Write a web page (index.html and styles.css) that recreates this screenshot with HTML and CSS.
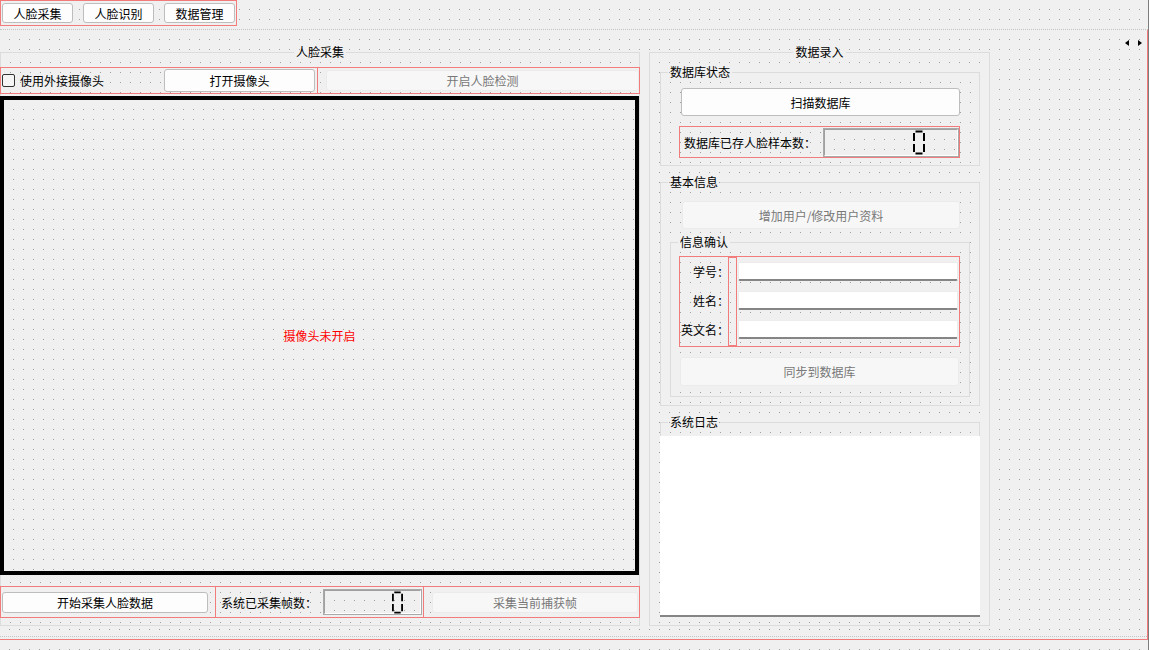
FILE: index.html
```html
<!DOCTYPE html>
<html lang="zh-CN">
<head>
  <meta charset="UTF-8">
  <meta name="viewport" content="width=device-width, initial-scale=1.0">
  <title>人脸识别</title>
  <link rel="stylesheet" href="styles.css">
</head>
<body>

<div class="window">
  <div class="topbar">
    <div class="tabset layout">
      <button class="btn tabbtn">人脸采集</button>
      <button class="btn tabbtn">人脸识别</button>
      <button class="btn tabbtn">数据管理</button>
    </div>
  </div>

  <div class="central">
    <div class="scroller"><span class="arrow left"></span><span class="arrow right"></span></div>

    <div class="page">
      <!-- 左侧：人脸采集 -->
      <fieldset class="group capture">
        <legend class="center">人脸采集</legend>
        <div class="pane">
          <div class="row top-row">
            <div class="layout cam-box">
              <label class="check"><span class="box"></span>使用外接摄像头</label>
              <button class="btn open-cam">打开摄像头</button>
            </div>
            <div class="layout detect-box">
              <button class="btn disabled detect">开启人脸检测</button>
            </div>
          </div>

          <div class="video">摄像头未开启</div>

          <div class="row bottom-row">
            <div class="layout start-box">
              <button class="btn start">开始采集人脸数据</button>
            </div>
            <div class="layout count-box">
              <span class="label">系统已采集帧数：</span>
              <div class="lcd small">
                <svg width="11" height="23" viewBox="0 0 12 24"><path d="M2.5 1H9.5M11 2.5V10.5M11 13.5V21.5M2.5 23H9.5M1 13.5V21.5M1 2.5V10.5" stroke="#000" stroke-width="2" fill="none"/></svg>
              </div>
            </div>
            <div class="layout grab-box">
              <button class="btn disabled grab">采集当前捕获帧</button>
            </div>
          </div>
        </div>
      </fieldset>

      <!-- 右侧：数据录入 -->
      <fieldset class="group entry">
        <legend class="center">数据录入</legend>

        <fieldset class="group sub db-state">
          <legend>数据库状态</legend>
          <button class="btn scan">扫描数据库</button>
          <div class="layout sample-box">
            <span class="label">数据库已存人脸样本数：</span>
            <div class="lcd big">
              <svg width="12" height="25" viewBox="0 0 12 24"><path d="M2.5 1H9.5M11 2.5V10.5M11 13.5V21.5M2.5 23H9.5M1 13.5V21.5M1 2.5V10.5" stroke="#000" stroke-width="2" fill="none"/></svg>
            </div>
          </div>
        </fieldset>

        <fieldset class="group sub basic">
          <legend>基本信息</legend>
          <button class="btn disabled add-user">增加用户/修改用户资料</button>

          <fieldset class="group confirm">
            <legend>信息确认</legend>
            <div class="layout form">
              <div class="labels">
                <span>学号：</span>
                <span>姓名：</span>
                <span>英文名：</span>
              </div>
              <div class="layout spacer"></div>
              <div class="inputs">
                <input class="edit" type="text">
                <input class="edit" type="text">
                <input class="edit" type="text">
              </div>
            </div>
            <button class="btn disabled sync">同步到数据库</button>
          </fieldset>
        </fieldset>

        <fieldset class="group sub log">
          <legend>系统日志</legend>
          <div class="log-text"></div>
        </fieldset>
      </fieldset>
    </div>
  </div>
</div>

</body>
</html>
```

FILE: styles.css
```css
body {
  margin: 0;
  width: 1149px;
  height: 650px;
  overflow: hidden;
  font-family: "Noto Sans CJK SC", "Noto Sans", sans-serif;
  font-size: 12px;
  color: #000;
}

/* Qt Designer 的点阵背景 */
.window, .group, .video, .lcd {
  background-color: #f0f0f0;
  background-image:
    linear-gradient(90deg, #f0f0f0 9px, transparent 9px),
    linear-gradient(#f0f0f0 9px, #a0a0a0 9px);
  background-size: 10px 10px;
}
.video, .lcd { background-color: transparent; background-image: linear-gradient(90deg, #f0f0f0 9px, transparent 9px), linear-gradient(#f0f0f0 9px, #a0a0a0 9px); }

.window {
  width: 1148px;
  height: 650px;
  border-right: 1px solid #7d7d7d;
}

.layout { border: 1px solid #f27c7c; box-sizing: border-box; }

.btn {
  font-family: inherit;
  font-size: 12px;
  color: #000;
  background: #fdfdfd;
  border: 1px solid #bdbdbd;
  border-radius: 3px;
  padding: 0;
  box-sizing: border-box;
}
.btn.disabled {
  background: #f7f7f7;
  border-color: #ebebeb;
  color: #787878;
}

/* 顶部按钮 */
.topbar {
  height: 29px;
  border-bottom: 1px dotted #c4c4c4;
}
.tabset {
  display: inline-flex;
  gap: 10px;
  padding: 2px 1px;
}
.tabbtn { width: 71px; height: 20px; }

.central {
  position: relative;
  height: 609px;
  border-bottom: 1px solid #f27c7c;
  border-right: 1px solid #f27c7c;
  box-sizing: content-box;
}
.scroller {
  position: absolute;
  top: 10px;
  right: 5px;
  display: flex;
  gap: 9px;
}
.arrow { width: 0; height: 0; border-top: 3px solid transparent; border-bottom: 3px solid transparent; }
.arrow.left { border-right: 4px solid #000; }
.arrow.right { border-left: 4px solid #000; }

.page {
  height: 591px;
  padding-top: 15px;
  display: flex;
  gap: 9px;
  border-bottom: 1px dotted #c4c4c4;
}

/* 分组框 */
.group {
  margin: 0;
  padding: 0;
  min-width: 0;
  border: 1px solid #dcdcdc;
  box-sizing: border-box;
  background-color: transparent;
}
.group legend {
  padding: 0 2px;
  margin-left: 7px;
  line-height: 14px;
  height: 14px;
}
.group legend.center { margin: 0 auto; }

.capture { width: 640px; height: 581px; }
.entry { width: 341px; height: 581px; padding: 0 10px; }

.pane { margin: 0 -1px; }
.row { display: flex; }

.top-row { margin-top: 8px; height: 27px; }
.cam-box { width: 318px; display: flex; align-items: center; padding-left: 1px; }
.check { display: flex; align-items: center; gap: 5px; width: 162px; }
.check .box {
  width: 13px; height: 13px;
  border: 1px solid #333;
  border-radius: 2px;
  box-sizing: border-box;
  background: #f5f5f5;
}
.open-cam { width: 151px; height: 23px; }
.detect-box { width: 323px; margin-left: -1px; display: flex; align-items: center; padding-left: 8px; }
.detect { width: 313px; height: 21px; }

.video {
  margin-top: 2px;
  width: 639px;
  height: 479px;
  border: 4px solid #000;
  box-sizing: border-box;
  display: flex;
  align-items: center;
  justify-content: center;
  color: #ff0000;
}

.bottom-row { margin-top: 11px; height: 32px; }
.start-box { width: 216px; display: flex; align-items: center; padding-left: 1px; }
.start { width: 206px; height: 21px; }
.count-box { width: 209px; margin-left: -1px; display: flex; align-items: center; padding-left: 5px; }
.count-box .label { width: 102px; }
.lcd {
  box-sizing: border-box;
  border: 2px solid;
  border-color: #a0a0a0 #fff #fff #a0a0a0;
  outline: 1px solid #a9a9a9;
  outline-offset: -1px;
  display: flex;
  align-items: center;
  justify-content: flex-end;
}
.lcd.small { width: 99px; height: 26px; padding-right: 17px; }
.grab-box { width: 217px; margin-left: -1px; display: flex; align-items: center; padding-left: 8px; }
.grab { width: 206px; height: 21px; }

/* 右侧 */
.sub { width: 320px; }
.db-state { margin-top: 6px; padding-bottom: 7px; }
.scan { display: block; margin: 9px 0 0 20px; width: 279px; height: 28px; }
.sample-box {
  margin: 10px 0 0 18px;
  width: 281px;
  height: 32px;
  display: flex;
  align-items: center;
  padding-left: 4px;
}
.sample-box .label { width: 140px; }
.lcd.big { width: 136px; height: 29px; padding-right: 32px; }

.basic { margin-top: 9px; padding-bottom: 8px; }
.add-user { display: block; margin: 12px 0 0 21px; width: 278px; height: 28px; }

.confirm { margin: 6px 0 0 9px; width: 300px; padding-bottom: 10px; }
.form {
  margin: 7px 0 0 8px;
  width: 281px;
  height: 91px;
  display: flex;
}
.labels {
  width: 49px;
  display: flex;
  flex-direction: column;
  align-items: flex-end;
  padding-top: 6px;
  gap: 12px;
}
.labels span { line-height: 17px; }
.spacer { width: 9px; margin-left: -1px; }
.inputs {
  display: flex;
  flex-direction: column;
  gap: 10px;
  padding: 5px 0 0 1px;
}
.edit {
  width: 220px;
  height: 19px;
  box-sizing: border-box;
  border: 1px solid #ececec;
  border-bottom: 2px solid #858585;
  border-radius: 2px;
  background: #fff;
  padding: 0;
  margin: 0;
}
.sync { display: block; margin: 10px 0 0 9px; width: 279px; height: 29px; }

.log { margin-top: 9px; }
.log-text {
  margin: 7px -1px -1px;
  height: 181px;
  background: #fff;
  border-bottom: 2px solid #858585;
  box-sizing: border-box;
}
```
